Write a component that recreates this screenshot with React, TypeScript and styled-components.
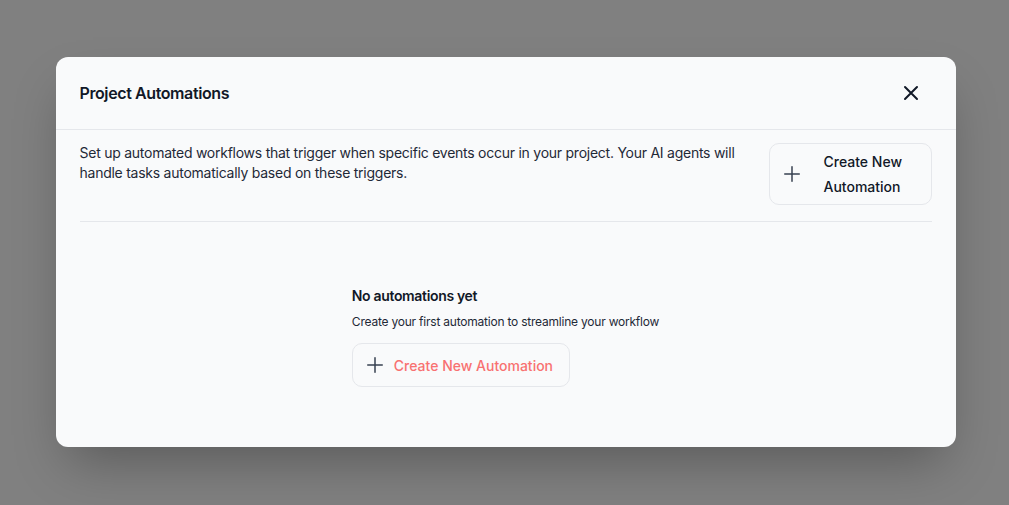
import * as React from "react";
import styled, { createGlobalStyle } from "styled-components";

const GlobalStyle = createGlobalStyle`
  html, body {
    margin: 0;
    padding: 0;
    height: 100%;
  }
  body {
    font-family: Inter, "Noto Sans", sans-serif;
    background: #808080;
    color: #111827;
  }
  #root {
    height: 100%;
  }
`;

const Overlay = styled.div`
  height: 100vh;
  display: flex;
  align-items: center;
  justify-content: center;
  padding: 0 0 1px 2px;
  box-sizing: border-box;
  background: #808080;
`;

const Modal = styled.div`
  width: 900px;
  background: #f9fafb;
  border-radius: 12px;
  box-shadow: 0 25px 50px -12px rgba(0, 0, 0, 0.3);
  overflow: hidden;
`;

const Header = styled.div`
  height: 72px;
  display: flex;
  align-items: center;
  justify-content: space-between;
  padding: 0 24px;
  border-bottom: 1px solid #e5e7eb;
`;

const Title = styled.h2`
  margin: 0;
  font-size: 16px;
  font-weight: 600;
  letter-spacing: -0.025em;
  color: #111827;
`;

const CloseButton = styled.button`
  display: flex;
  align-items: center;
  justify-content: center;
  width: 24px;
  height: 24px;
  padding: 0;
  margin-right: 9px;
  border: none;
  background: none;
  color: #111827;
  cursor: pointer;
`;

const Body = styled.div`
  padding: 13px 24px 0;
`;

const TopRow = styled.div`
  display: flex;
  align-items: flex-start;
  gap: 24px;
  padding-bottom: 16px;
  border-bottom: 1px solid #e5e7eb;
`;

const Description = styled.p`
  flex: 1;
  margin: 0;
  font-size: 14px;
  line-height: 20px;
  letter-spacing: -0.018em;
  color: #1f2937;
`;

const Button = styled.button<{ $accent?: boolean }>`
  display: flex;
  align-items: center;
  flex-shrink: 0;
  border: 1px solid #e5e7eb;
  background: #f9fafb;
  border-radius: 10px;
  font-family: inherit;
  font-size: 14px;
  font-weight: 500;
  color: ${(p) => (p.$accent ? "#f87171" : "#111827")};
  cursor: pointer;
`;

const HeaderButton = styled(Button)`
  width: 163px;
  height: 62px;
  padding: 0 0 0 14px;
  gap: 24px;
  line-height: 25px;
  text-align: left;
`;

const EmptyButton = styled(Button)`
  height: 44px;
  padding: 0 16px 0 14px;
  gap: 11px;
`;

const Empty = styled.div`
  display: flex;
  justify-content: center;
  padding: 64px 0 60px;
`;

const EmptyInner = styled.div`
  display: flex;
  flex-direction: column;
  align-items: flex-start;
`;

const EmptyTitle = styled.h3`
  margin: 0;
  font-size: 14px;
  line-height: 20px;
  font-weight: 600;
  letter-spacing: -0.024em;
  color: #111827;
`;

const EmptyText = styled.p`
  margin: 8px 0 13px;
  font-size: 12px;
  line-height: 16px;
  letter-spacing: -0.018em;
  color: #1f2937;
`;

const PlusIcon = () => (
  <svg width="16" height="16" viewBox="0 0 16 16" fill="none" stroke="#374151" strokeWidth="1.5" strokeLinecap="round">
    <path d="M8 0.75v14.5M0.75 8h14.5" />
  </svg>
);

const CloseIcon = () => (
  <svg width="24" height="24" viewBox="0 0 24 24" fill="none" stroke="currentColor" strokeWidth="2" strokeLinecap="round">
    <path d="M18 6 6 18M6 6l12 12" />
  </svg>
);

export default function App() {
  return (
    <>
      <GlobalStyle />
      <Overlay>
        <Modal>
          <Header>
            <Title>Project Automations</Title>
            <CloseButton aria-label="Close">
              <CloseIcon />
            </CloseButton>
          </Header>
          <Body>
            <TopRow>
              <Description>
                Set up automated workflows that trigger when specific events occur in your project. Your AI agents will
                handle tasks automatically based on these triggers.
              </Description>
              <HeaderButton>
                <PlusIcon />
                <span>
                  Create New
                  <br />
                  Automation
                </span>
              </HeaderButton>
            </TopRow>
            <Empty>
              <EmptyInner>
                <EmptyTitle>No automations yet</EmptyTitle>
                <EmptyText>Create your first automation to streamline your workflow</EmptyText>
                <EmptyButton $accent>
                  <PlusIcon />
                  Create New Automation
                </EmptyButton>
              </EmptyInner>
            </Empty>
          </Body>
        </Modal>
      </Overlay>
    </>
  );
}
